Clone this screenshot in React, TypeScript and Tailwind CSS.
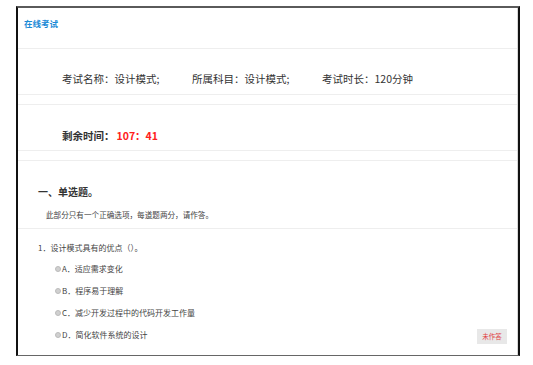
import React from "react";

export default function App() {
  const options = [
    "A．适应需求变化",
    "B．程序易于理解",
    "C．减少开发过程中的代码开发工作量",
    "D．简化软件系统的设计",
  ];
  return (
    <div
      className="w-[533px] h-[365px] bg-white pt-[6px] pl-[16px] overflow-hidden"
      style={{ fontFamily: '"Noto Sans CJK SC", "Noto Sans", sans-serif' }}
    >
      <div className="w-[504px] h-[350px] border-t-2 border-t-[#5a5a5a] border-l-2 border-l-[#111] border-r-2 border-r-[#111] border-b border-b-[#666] flex flex-col">
        <div className="flex-1 flex flex-col border-r border-r-[#d8d8d8]">
          {/* header */}
          <div className="h-[41px] border-b border-[#eeeeee] pl-[6px] pt-[8px] leading-[14px]">
            <div className="text-[8.5px] font-bold text-[#1a8ad6] leading-[14px]">在线考试</div>
          </div>
          {/* info */}
          <div className="h-[46px] border-b border-[#eeeeee] flex items-end pb-[8px] pl-[44px] text-[10.5px] text-[#333] leading-[14px]">
            <span className="w-[130px]">考试名称：设计模式;</span>
            <span className="w-[130px]">所属科目：设计模式;</span>
            <span>考试时长：120分钟</span>
          </div>
          <div className="h-[10px] border-b border-[#eeeeee]" />
          {/* timer */}
          <div className="h-[46px] border-b border-[#eeeeee] flex items-end pb-[7px] pl-[44px] text-[10.5px] font-bold leading-[14px]">
            <span className="text-[#333]">剩余时间：</span>
            <span className="text-[#ff2020] ml-[2px]">107：41</span>
          </div>
          <div className="h-[10px] border-b border-[#eeeeee]" />
          {/* section */}
          <div className="h-[68px] border-b border-[#eeeeee] pl-[20px] pt-[24px]">
            <div className="text-[10px] font-bold text-[#333] leading-[14px]">一、单选题。</div>
            <div className="text-[7.6px] text-[#444] leading-[12px] mt-[10px] pl-[8px]">
              此部分只有一个正确选项，每道题两分，请作答。
            </div>
          </div>
          {/* question */}
          <div className="flex-1 pl-[20px] pt-[13px] relative">
            <div className="text-[8px] text-[#444] leading-[12px]">1．设计模式具有的优点（）。</div>
            <div className="flex flex-col gap-[10px] mt-[9px] pl-[17px]">
              {options.map((o) => (
                <div key={o} className="flex items-center text-[8px] text-[#444] leading-[12px]">
                  <span className="w-[6px] h-[6px] rounded-full bg-[#d0d0d0] border border-[#bbb] mr-[1px]" />
                  <span>{o}</span>
                </div>
              ))}
            </div>
            <div className="absolute right-[10px] bottom-[11px] w-[30px] h-[15px] bg-[#e8e8e8] flex items-center justify-center text-[6.5px] text-[#e04040]">
              未作答
            </div>
          </div>
        </div>
      </div>
    </div>
  );
}
